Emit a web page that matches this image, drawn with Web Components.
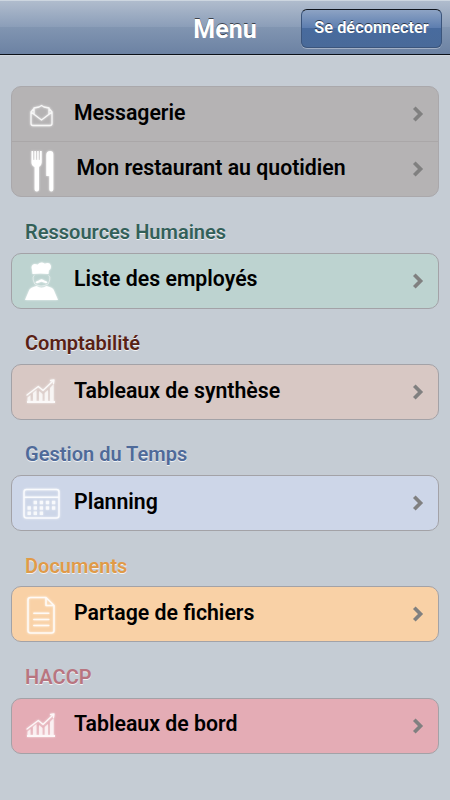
<!DOCTYPE html>
<html lang="fr">
<head>
<meta charset="utf-8">
<title>Menu</title>
<style>
html,body{margin:0;height:100%}
body{background:#c5ccd4;font-family:Roboto,"Liberation Sans",sans-serif;overflow:hidden}
</style>
</head>
<body>
<menu-app></menu-app>
<script>
const chart='<g fill="#fff" stroke="none"><path d="M15 37h28v2H15z"/><path d="M15.500 33.500l3-2.500v6h-3zM21 29l3.500-3v11H21zM27 27l3.500 3v7H27zM32.700 29l3.300-3v11h-3.300zM38 24l3.700-4v17H38z" opacity=".8"/></g><path d="M15 31l11.300-8.500 4.700 4L41 17M38.500 16.500l3.500-.5-.5 3.500" stroke-width="1.300"/>';
const icons={
 mail:'<path d="M19 25v11.500q0 2 2 2h17q2 0 2-2V25l-3-3.500M19 25l3-3.500M19 25l10.500 8L40 25M22 27v-6l5-1 2.500-1.500L32 20l5 1v6" stroke-width="1.300"/>',
 cutlery:'<path fill="#fff" stroke="none" d="M19.500 9h1.600v9h1.300V9h1.500v9h1.300V9h1.500v9H28V9h1.700v11.500q0 3-2.700 4.500V47.500q0 2-2.200 2t-2.200-2V25q-3.100-1.500-3.100-4.500zM34.300 13q0-4 4-4 3 0 3 3v35.500q0 2-2 2t-2-2V34h-3z"/>',
 chef:'<path fill="#fff" stroke="none" d="M20.500 21l-.5-4.500q-1.500-4.500 2.500-5.500 2 0 3 .8Q28 9 31 9.700q1.200.3 1.800 1.100 4.700-2.200 6 1.700.8 3.500-2 5l-.3 3.500q-8-1-16 0zM13 47l4.500-10.500q1.200-2 4-2.500l3-1q5 3.500 10 0l3 1q3 .5 4 2.500L46 47z"/><path fill="#fff" stroke="none" d="M23.500 29.500q.8-1.700 2.800-1.700l1.700-1.100q1.500-.8 3 0l1.700 1.100q2 0 2.800 1.700-1.500 1.200-3 .3l-3-1-3 1q-1.500.9-3-.3z"/><path d="M22 22.500q-1.500 1.200-.8 4.500l1.500 4q6 4 13.500 0l1.500-4q.7-3.300-.8-4.500" stroke-width=".9" opacity=".5"/>',
 chart,
 calendar:'<rect x="12" y="13.500" width="35" height="28.500" rx="2.500" stroke-width="1.500"/><path d="M12.500 21.300h34" stroke-width="1.500"/><path d="M21.600 26.500h22M15.500 32h28M15.500 37.300h16" stroke-width="3.400" stroke-dasharray="3.400 2.700" stroke-linecap="butt" opacity=".9"/>',
 doc:'<path d="M34 10.500H18.500q-2.500 0-2.500 2.500v30.500q0 2.500 2.500 2.500h21q2.500 0 2.500-2.500V18.500zM34 10.500v8h8" stroke-width="1.600"/><path d="M21.800 26.200h15M21.800 32.500h15M21.800 38.500h15" stroke-width="1.500"/>'
};
const def=(name,html)=>customElements.define(name,class extends HTMLElement{
 constructor(){super();this.attachShadow({mode:'open'}).innerHTML=typeof html==='function'?html(this):html}
});
def('nav-bar',`<style>
:host{display:grid;grid-template-columns:1fr auto 1fr;align-items:center;height:55px;box-sizing:border-box;padding:2px 8px 0 8px;border-top:1px solid #cdd6e0;border-bottom:1px solid #0c1118;box-shadow:0 1px #d0d6dd;background:linear-gradient(#b0bccd,#8a9db8 50%,#8195b1 50%,#6c82a3)}
h1{grid-column:2;margin:2px 0 0;font-size:25px;line-height:30px;font-weight:700;color:#fff;text-shadow:0 -1px rgba(0,0,0,.6)}
::slotted(*){grid-column:3;justify-self:end}
</style><h1>Menu</h1><slot></slot>`);
def('nav-button',`<style>
:host{display:flex;align-items:center;justify-content:center;box-sizing:border-box;width:141px;height:39px;border:1px solid #3b557c;border-top-color:#10151d;border-radius:6px;background:linear-gradient(#8da3c4,#5c7daf 49%,#486b9e 50%,#496a99);box-shadow:0 1px rgba(255,255,255,.35);color:#fff;font-size:16.350px;font-weight:600;line-height:20px;padding-bottom:2px;text-shadow:0 -1px rgba(0,0,0,.6);white-space:nowrap}
</style><slot></slot>`);
def('menu-title',`<style>
:host{display:block;box-sizing:border-box;height:55.250px;padding:22.500px 0 0 25px;font-size:20.050px;line-height:24px;font-weight:600;text-shadow:0 1px rgba(255,255,255,.75)}
</style><slot></slot>`);
def('menu-card',`<style>
:host{display:block;box-sizing:border-box;margin:0 11.500px 0 11.400px;border:1px solid #a3a2a7;border-radius:10px;overflow:hidden}
</style><slot></slot>`);
def('menu-row',el=>`<style>
:host{display:flex;align-items:center;box-sizing:border-box;height:54px;color:#000;font-size:21.270px;font-weight:600}
:host([divided]){border-bottom:1px solid #aaa7a8;height:55px}
.icon{flex:none;width:48px;height:54px;margin-top:-1px;filter:drop-shadow(0 0 .8px rgba(255,255,255,.8));opacity:.9}
:host([solid]) .icon{opacity:1}
.label{flex:1;padding:0 0 2.500px 13.600px;white-space:nowrap;line-height:26px}
:host([wide]) .label{padding-left:16.200px}
.chev{flex:none;width:12px;height:18px;margin-right:13.600px}
</style><svg class="icon" viewBox="0 0 48 54" fill="none" stroke="#fff" stroke-linejoin="round" stroke-linecap="round">${icons[el.getAttribute('icon')]}</svg>
<span class="label"><slot></slot></span>
<svg class="chev" viewBox="0 0 12 18"><path d="M2.300 2.800l6.200 6.200-6.200 6.200" fill="none" stroke="#808080" stroke-width="3.700"/></svg>`);
def('menu-app',`<style>
:host{display:flex;flex-direction:column;height:800px}
main{padding-top:31.450px}
</style>
<nav-bar><nav-button>Se déconnecter</nav-button></nav-bar>
<main>
<menu-card style="background:#b5b3b4;border-color:#aaa8ab"><menu-row icon="mail" divided>Messagerie</menu-row><menu-row icon="cutlery" wide solid>Mon restaurant au quotidien</menu-row></menu-card>
<menu-title style="color:#336059">Ressources Humaines</menu-title>
<menu-card style="background:#bdd3d0"><menu-row icon="chef" solid>Liste des employés</menu-row></menu-card>
<menu-title style="color:#592115">Comptabilité</menu-title>
<menu-card style="background:#d8c8c4"><menu-row icon="chart">Tableaux de synthèse</menu-row></menu-card>
<menu-title style="color:#4f6a99">Gestion du Temps</menu-title>
<menu-card style="background:#cdd6e8"><menu-row icon="calendar">Planning</menu-row></menu-card>
<menu-title style="color:#e09a48">Documents</menu-title>
<menu-card style="background:#f9d1a6"><menu-row icon="doc">Partage de fichiers</menu-row></menu-card>
<menu-title style="color:#b87580">HACCP</menu-title>
<menu-card style="background:#e4acb5"><menu-row icon="chart">Tableaux de bord</menu-row></menu-card>
</main>`);
</script>
</body>
</html>
